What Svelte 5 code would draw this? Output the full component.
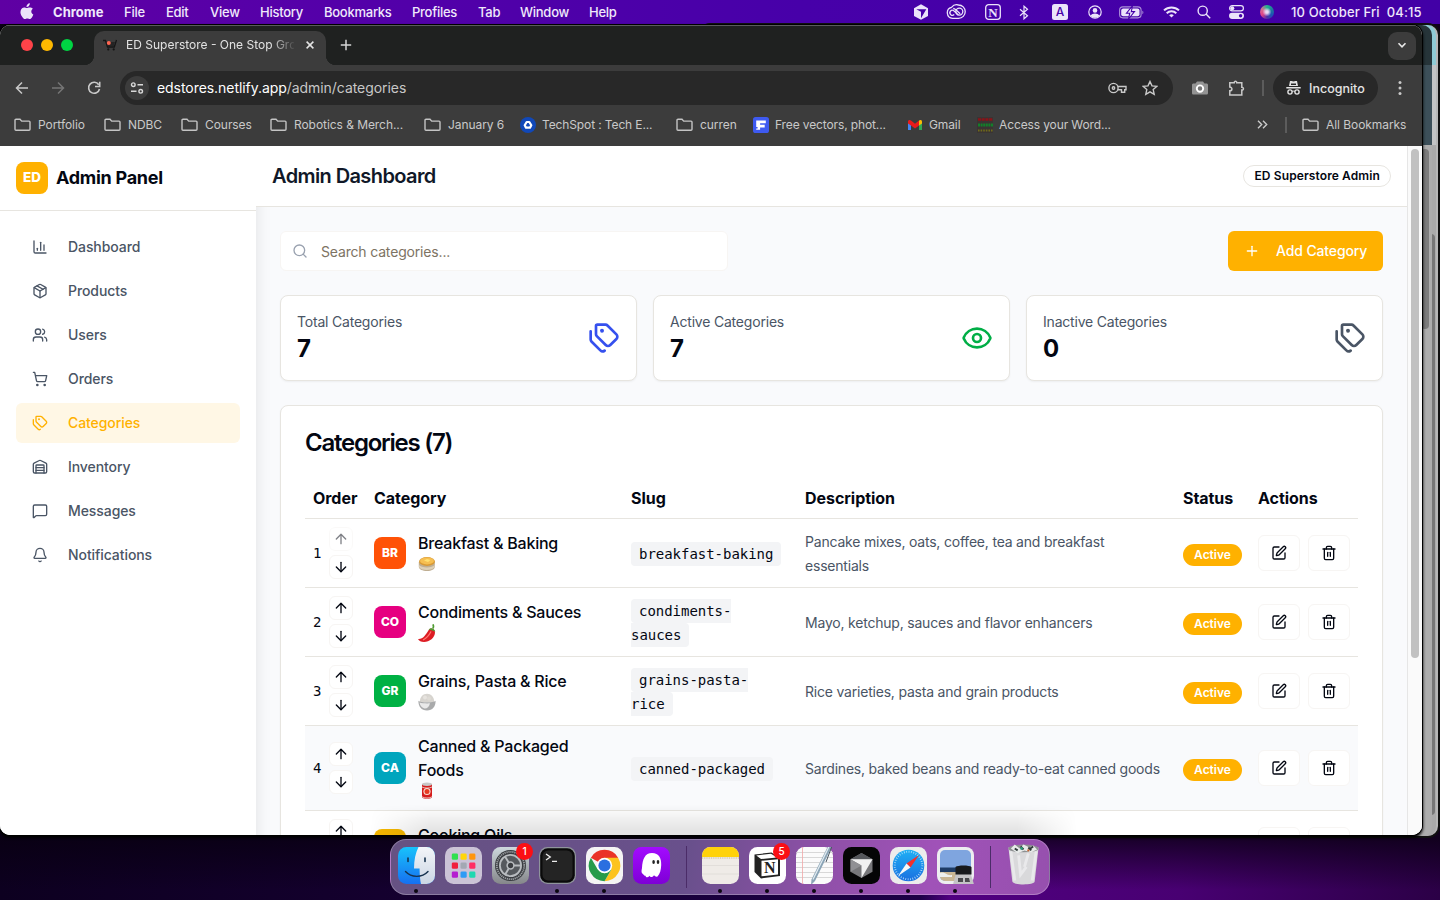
<script>
  const circle = (cx, cy, r) => `M${cx - r} ${cy}a${r} ${r} 0 1 0 ${2 * r} 0a${r} ${r} 0 1 0 ${-2 * r} 0`;

  const paths = {
    chart: ['M3 3v16a2 2 0 0 0 2 2h16', 'M18 17V9', 'M13 17V5', 'M8 17v-3'],
    box: ['M11 21.73a2 2 0 0 0 2 0l7-4A2 2 0 0 0 21 16V8a2 2 0 0 0-1-1.73l-7-4a2 2 0 0 0-2 0l-7 4A2 2 0 0 0 3 8v8a2 2 0 0 0 1 1.73z', 'M12 22V12', 'M3.29 7 12 12 20.71 7', 'm7.5 4.27 9 5.15'],
    users: ['M16 21v-2a4 4 0 0 0-4-4H6a4 4 0 0 0-4 4v2', 'M16 3.128a4 4 0 0 1 0 7.744', 'M22 21v-2a4 4 0 0 0-3-3.87', circle(9, 7, 4)],
    cart: [circle(8, 21, 1), circle(19, 21, 1), 'M2.05 2.05h2l2.66 12.42a2 2 0 0 0 2 1.58h9.78a2 2 0 0 0 1.95-1.57l1.65-7.43H5.12'],
    tags: ['M13.172 2a2 2 0 0 1 1.414.586l6.71 6.71a2.4 2.4 0 0 1 0 3.408l-4.592 4.592a2.4 2.4 0 0 1-3.408 0l-6.71-6.71A2 2 0 0 1 6 9.172V3a1 1 0 0 1 1-1z', 'M2 7v6.172a2 2 0 0 0 .586 1.414l6.71 6.71a2.4 2.4 0 0 0 3.191.193', circle(10.5, 6.5, 0.5)],
    warehouse: ['M18 21V10a1 1 0 0 0-1-1H7a1 1 0 0 0-1 1v11', 'M22 19a2 2 0 0 1-2 2H4a2 2 0 0 1-2-2V8a2 2 0 0 1 1.132-1.803l7.95-3.974a2 2 0 0 1 1.837 0l7.948 3.974A2 2 0 0 1 22 8z', 'M6 13h12', 'M6 17h12'],
    message: ['M22 17a2 2 0 0 1-2 2H6.828a2 2 0 0 0-1.414.586l-2.202 2.202A.71.71 0 0 1 2 21.286V5a2 2 0 0 1 2-2h16a2 2 0 0 1 2 2z'],
    bell: ['M10.268 21a2 2 0 0 0 3.464 0', 'M3.262 15.326A1 1 0 0 0 4 17h16a1 1 0 0 0 .74-1.673C19.41 13.956 18 12.499 18 8A6 6 0 0 0 6 8c0 4.499-1.411 5.956-2.738 7.326'],
    search: ['m21 21-4.34-4.34', circle(11, 11, 8)],
    plus: ['M5 12h14', 'M12 5v14'],
    up: ['m5 12 7-7 7 7', 'M12 19V5'],
    down: ['M12 5v14', 'm19 12-7 7-7-7'],
    eye: ['M2.062 12.348a1 1 0 0 1 0-.696 10.75 10.75 0 0 1 19.876 0 1 1 0 0 1 0 .696 10.75 10.75 0 0 1-19.876 0', circle(12, 12, 3)],
    edit: ['M12 3H5a2 2 0 0 0-2 2v14a2 2 0 0 0 2 2h14a2 2 0 0 0 2-2v-7', 'M18.375 2.625a1 1 0 0 1 3 3l-9.013 9.014a2 2 0 0 1-.853.505l-2.873.84a.5.5 0 0 1-.62-.62l.84-2.873a2 2 0 0 1 .506-.852z'],
    trash: ['M10 11v6', 'M14 11v6', 'M19 6v14a2 2 0 0 1-2 2H7a2 2 0 0 1-2-2V6', 'M3 6h18', 'M8 6V4a2 2 0 0 1 2-2h4a2 2 0 0 1 2 2v2']
  };

  const menus = ['Chrome', 'File', 'Edit', 'View', 'History', 'Bookmarks', 'Profiles', 'Tab', 'Window', 'Help'];

  const bookmarks = [
    ['folder', 'Portfolio'], ['folder', 'NDBC'], ['folder', 'Courses'], ['folder', 'Robotics & Merch...'],
    ['folder', 'January 6'], ['techspot', 'TechSpot : Tech E...'], ['folder', 'curren'],
    ['freepik', 'Free vectors, phot...'], ['gmail', 'Gmail'], ['word', 'Access your Word...']
  ];

  const nav = [
    ['chart', 'Dashboard'], ['box', 'Products'], ['users', 'Users'], ['cart', 'Orders'],
    ['tags', 'Categories'], ['warehouse', 'Inventory'], ['message', 'Messages'], ['bell', 'Notifications']
  ];

  const stats = [
    { label: 'Total Categories', value: 7, icon: 'tags', tone: 'blue' },
    { label: 'Active Categories', value: 7, icon: 'eye', tone: 'green' },
    { label: 'Inactive Categories', value: 0, icon: 'tags', tone: 'slate' }
  ];

  const rows = [
    { name: 'Breakfast & Baking', code: 'BR', color: '#ff5207', food: 'pancake', slug: 'breakfast-baking', text: 'Pancake mixes, oats, coffee, tea and breakfast essentials' },
    { name: 'Condiments & Sauces', code: 'CO', color: '#e60080', food: 'chili', slug: 'condiments-sauces', text: 'Mayo, ketchup, sauces and flavor enhancers' },
    { name: 'Grains, Pasta & Rice', code: 'GR', color: '#00b144', food: 'rice', slug: 'grains-pasta-rice', text: 'Rice varieties, pasta and grain products' },
    { name: 'Canned & Packaged Foods', code: 'CA', color: '#00a5bd', food: 'can', slug: 'canned-packaged', text: 'Sardines, baked beans and ready-to-eat canned goods' },
    { name: 'Cooking Oils', code: '', color: '#f5b800', food: '', slug: '', text: '' }
  ];

  const dockLeft = [['finder', true], ['launchpad', false], ['settings', false, '1'], ['terminal', true], ['chrome', true], ['phantom', false]];
  const dockRight = [['notes', true], ['notion', true, '5'], ['textedit', true], ['cursor', true], ['safari', true], ['preview', true]];
  const padColors = ['#2fe04f', '#ffd60a', '#ff9510', '#f0203c', '#a3a8b3', '#ff2d64', '#b51fd0', '#2e9bf5', '#1fd8b0'];
</script>

{#snippet icon(name, size = 16)}
  <svg class="line" width={size} height={size} viewBox="0 0 24 24">
    {#each paths[name] as d}<path {d} />{/each}
  </svg>
{/snippet}

{#snippet bookmarkIcon(kind)}
  <svg width="17" height="16" viewBox="0 0 17 16">
    {#if kind === 'folder'}
      <path d="M1 3.2c0-.6.4-1 1-1h4l1.700 1.900H15c.6 0 1 .4 1 1v7.200c0 .6-.4 1-1 1H2c-.6 0-1-.4-1-1z" fill="none" stroke="#c4c4c4" stroke-width="1.400" />
    {:else if kind === 'techspot'}
      <circle cx="8" cy="8" r="8" fill="#1148b8" />
      <path d="M6.700 5h2.600l2 3.300-1.300 2.300H6L4.700 8.300z" fill="none" stroke="#fff" stroke-width="2.200" stroke-linejoin="round" />
    {:else if kind === 'freepik'}
      <rect width="16" height="16" rx="2.600" fill="#3e5af0" />
      <path d="M3.200 3.400h9.600v2.900H7.100v1.500h4.600v2.700H7.100v2.300H3.200v-1.400h1.400v-1.300H3.200z" fill="#fff" />
    {:else if kind === 'gmail'}
      <path d="M1 4.400v8.700h3V7z" fill="#4285f4" /><path d="M15 4.400v8.700h-3V7z" fill="#34a853" />
      <path d="M12 3.600c1.300-1.200 3-.7 3 1.200v1.600L12 8.500z" fill="#fbbc04" />
      <path d="M1 6.400V4.800c0-2 1.900-2.300 3-1.200L8 6.700l4-3.100v4.900l-4 3-4-3z" fill="#ea1b1b" />
    {:else}
      <rect width="16" height="16" fill="#3a3433" />
      <path d="M1 2.500h15" stroke="#8c1218" stroke-width="2.500" stroke-dasharray="3 .7" />
      <path d="M1 8h15" stroke="#12802a" stroke-width="2.800" stroke-dasharray="2 .6" />
      <path d="M1 13.600h15" stroke="#6f6a1a" stroke-width="2" stroke-dasharray="1.600 1" />
    {/if}
  </svg>
{/snippet}

{#snippet food(kind)}
  <svg class="food" width="18" height="18" viewBox="0 0 18 18">
    {#if kind === 'pancake'}
      <path d="M.8 7v4.500C.8 14.500 4.500 16 9 16s7.800-1.700 7.800-4.500V7z" fill="#bfae92" />
      <path d="M1 10c2 3 13 3.500 15.700 0v2c-2 4-14 4-15.700 0z" fill="#ddd0b8" />
      <ellipse cx="9" cy="6.500" rx="8" ry="4.400" fill="#d99a35" /><ellipse cx="9" cy="5.900" rx="7" ry="3.500" fill="#f6bf52" />
      <path d="M6 5.500 9 4l3.500 1L10 7z" fill="#ffe070" />
    {:else if kind === 'chili'}
      <path d="M11 5.500C13 3.500 17 5 17 8.500c0 5-5.500 9.500-11 9.500-3 0-5-1.200-6-3 5 .5 7.500-4 11-9.500z" fill="#dd1d24" />
      <path d="M13 7.500c-2 4-5 7-8 8.500" stroke="#ff7470" stroke-width="1.300" fill="none" />
      <path d="M10.800 5.700c1.800-2.500 5.700-1.500 6.500 2.100-2-1.400-3.800-1.600-6.500-2.100z" fill="#4f9c33" /><path d="M14.800 4.500c.8-1 .9-2.500.1-4.200" stroke="#4f9c33" stroke-width="1.700" fill="none" />
    {:else if kind === 'rice'}
      <path d="M1.800 9C1.800 4 5 .8 9 .8S16.200 4 16.200 9z" fill="#d7d4cf" /><circle cx="7" cy="4.500" r="2" fill="#e6e3de" /><circle cx="11" cy="5.500" r="2" fill="#dedbd5" />
      <path d="M.4 7.800c2 2 15.200 2 17.200 0 0 6-3 9.700-8.600 9.700S.4 13.800.4 7.800z" fill="#a9aaab" />
      <path d="M1.500 9.500c3 1 8 1 10.500.8-1 4-3 5.400-5.500 5.200-3-1-4.500-3-5-6z" fill="#e9e9e9" />
    {:else if kind === 'can'}
      <path d="M4 2h10v13.500c-1.500 1.700-8.500 1.700-10 0z" fill="#d51c1c" />
      <ellipse cx="9" cy="2.200" rx="5" ry="1.700" fill="#c8c8c8" /><path d="M4 5c2 1.400 8 1.400 10 0M4 14.800c2 1.600 8 1.600 10 0" stroke="#e8c9c4" stroke-width=".9" fill="none" />
      <circle cx="9" cy="9.500" r="3.600" fill="#f7dcd0" /><circle cx="9" cy="9.500" r="2.500" fill="#e63a22" />
    {/if}
  </svg>
{/snippet}

{#snippet dockIcon(kind)}
  <svg width="37" height="37" viewBox="0 0 37 37">
    {#if kind === 'finder'}
      <rect width="37" height="37" rx="8.500" fill="url(#gFinder)" />
      <path d="M20.500 0H28.500a8.500 8.500 0 0 1 8.500 8.500v20a8.500 8.500 0 0 1-8.500 8.500H23c-.8-4-1.300-8-1.400-15.500H16C16 13 17.500 6 20.500 0z" fill="url(#gFace)" />
      <path d="M10 11v3.500M27 11v3.500" stroke="#16324e" stroke-width="1.600" stroke-linecap="round" />
      <path d="M7.500 24.500c6 6.500 16.500 6.500 22.500 0" fill="none" stroke="#16324e" stroke-width="1.400" stroke-linecap="round" />
    {:else if kind === 'launchpad'}
      <rect width="37" height="37" rx="8.500" fill="#cbc3d6" />
      {#each padColors as c, i}<rect x={6.8 + (i % 3) * 8.7} y={6.5 + Math.floor(i / 3) * 9} width="6.200" height="6.200" rx="1.300" fill={c} />{/each}
    {:else if kind === 'settings'}
      <rect width="37" height="37" rx="8.500" fill="url(#gGrey)" />
      <circle cx="18.500" cy="18.500" r="15.500" fill="#3b3e42" /><circle cx="18.500" cy="18.500" r="13.700" fill="none" stroke="#9da1a4" stroke-width="1.800" stroke-dasharray="1.200 .8" />
      <circle cx="18.500" cy="18.500" r="10.600" fill="#55595d" stroke="#b8bcbf" stroke-width="1.800" />
      <path d="M18.500 18.500 29 18.500M18.500 18.500 13 9.500M18.500 18.500 13 27.700" stroke="#b8bcbf" stroke-width="1.900" />
      <circle cx="18.500" cy="18.500" r="3.400" fill="#3b3e42" stroke="#b8bcbf" stroke-width="1.500" />
    {:else if kind === 'terminal'}
      <rect width="37" height="37" rx="8.500" fill="#8f949b" /><rect x="1.200" y="1.200" width="34.600" height="34.600" rx="7.600" fill="#0a0a0a" /><rect x="3.500" y="3.500" width="30" height="30" rx="5.600" fill="#242424" />
      <path d="m7 7 4.300 3L7 13M13 14.300h5" fill="none" stroke="#eee" stroke-width="1.300" />
    {:else if kind === 'chrome'}
      <rect width="37" height="37" rx="8.500" fill="#f4f4f4" />
      <path d="M18.500 18.500 4.900 10.650A15.700 15.700 0 0 1 32.100 10.650z" fill="#ea3327" />
      <path d="M18.500 10.650H32.100A15.700 15.700 0 0 1 18.500 34.200L25.300 22.400z" fill="#fcc31e" />
      <path d="M4.900 10.650 11.700 22.400 18.500 26.300 25.300 22.400 18.500 34.200A15.700 15.700 0 0 1 4.900 10.650z" fill="#259b4a" />
      <circle cx="18.500" cy="18.500" r="7.700" fill="#fff" /><circle cx="18.500" cy="18.500" r="6.100" fill="#2a6fe0" />
    {:else if kind === 'phantom'}
      <rect width="37" height="37" rx="8.500" fill="url(#gPhantom)" />
      <path d="M10 27c-2-1-1.500-3.500-1-6C9.500 12 12 6 19 6s9.500 5 9.200 12c-.2 5-1.200 9-3.700 11.500-1.500 1-2.500-.5-3.500-1.200-1.200 2.200-3.500 2.500-4.500.4-1.500 2-3.500 2-4 0-.7.100-1.700-.2-2.500-1.700z" fill="#fff" />
      <ellipse cx="20.600" cy="15" rx="1.300" ry="2" fill="#222" /><ellipse cx="25" cy="15" rx="1.300" ry="2" fill="#222" />
    {:else if kind === 'notes'}
      <rect width="37" height="37" rx="8.500" fill="#efebe7" /><path d="M0 10V8.500A8.500 8.500 0 0 1 8.500 0h20A8.500 8.500 0 0 1 37 8.500V10z" fill="#ffd20a" />
      <path d="M0 11h37" stroke="#b7a977" stroke-width=".8" stroke-dasharray="1 .8" /><path d="M0 18.500h37M0 27h37" stroke="#dedad7" stroke-width=".8" />
    {:else if kind === 'notion'}
      <rect width="37" height="37" rx="8.500" fill="#fff" />
      <path d="m5.500 7.500 17-2 8.500 5.500V29l-19 2.500-6.500-6.500z" fill="#222" /><path d="M7.300 8.500 22 6.800l6 3.600-16 1.600z" fill="#fff" /><path d="M12.500 13.800 29 12.300v15.200l-16.500 1.800z" fill="#fff" />
      <text x="20.800" y="26.300" class="serif" text-anchor="middle">N</text>
    {:else if kind === 'textedit'}
      <rect width="37" height="37" rx="8.500" fill="#fbfbfb" /><path d="M0 5.500h37M0 10.500h37M0 15.500h37M0 20.500h37M0 25.500h37M0 30.500h37" stroke="#cfcfcf" stroke-width=".8" />
      <path d="M6.500 0v37" stroke="#f3a7a7" stroke-width=".8" />
      <path d="m33-3 3 2-17 35-4 4 .5-5.500z" fill="#8aa4b6" /><path d="m34-2.500-17 35" stroke="#e4edf2" stroke-width="1.200" /><path d="m36-1-6 16" stroke="#47545e" stroke-width="1" />
    {:else if kind === 'cursor'}
      <rect width="37" height="37" rx="8.500" fill="#050505" />
      <path d="m18.500 6 11 6.300v12.500l-11 6.300-11-6.300V12.300z" fill="#77777a" /><path d="m7.500 12.300 11-6.300 11 6.300z" fill="#55575b" /><path d="M7.500 12.300h22l-11 18.800V18.500z" fill="#f1f1f1" /><path d="M7.500 12.300v12.500l11-6.300z" fill="#909094" />
    {:else if kind === 'safari'}
      <rect width="37" height="37" rx="8.500" fill="#ececec" /><circle cx="18.500" cy="18.500" r="15.800" fill="url(#gSafari)" />
      <circle cx="18.500" cy="18.500" r="13.800" fill="none" stroke="#bfe4fb" stroke-width="2" stroke-dasharray=".7 1.700" />
      <path d="M29 8 16.500 16.500l4 4z" fill="#f2302d" /><path d="m8 29 8.500-12.500 4 4z" fill="#f7f7f7" />
    {:else if kind === 'preview'}
      <rect width="37" height="37" rx="8" fill="#ededf0" /><rect x="3" y="3" width="31" height="31" rx="5" fill="#7fa5df" />
      <path d="M3 20.500h31V25H3z" fill="#1f3c66" /><path d="M3 25h31v4a5 5 0 0 1-5 5H8a5 5 0 0 1-5-5z" fill="#c9b694" /><path d="M3 26c5-2 6 3 12 2v2H3z" fill="#eef0ef" />
      <path d="M19 26h14.500l3.500 11.500H16z" fill="#c4c4c6" /><path d="M18.500 20c2-2 14-2 16 0v7.500h-16z" fill="#17191c" /><path d="M21 31h5v4h-5zM28 31h4l1 4h-5z" fill="#4a4a4e" />
    {/if}
  </svg>
{/snippet}

<svg class="defs" width="0" height="0">
  <defs>
    <linearGradient id="gFinder" x2="0" y2="1"><stop stop-color="#18c2fb" /><stop offset="1" stop-color="#1670f0" /></linearGradient>
    <linearGradient id="gFace" x2="0" y2="1"><stop stop-color="#f3f5f8" /><stop offset="1" stop-color="#cbd6e4" /></linearGradient>
    <linearGradient id="gGrey" x2="0" y2="1"><stop stop-color="#cdd8dd" /><stop offset="1" stop-color="#85878a" /></linearGradient>
    <linearGradient id="gPhantom" x2="0" y2="1"><stop stop-color="#a30bff" /><stop offset="1" stop-color="#7e00d6" /></linearGradient>
    <linearGradient id="gSafari" x2="0" y2="1"><stop stop-color="#1fb0f5" /><stop offset="1" stop-color="#1a6fe0" /></linearGradient>
  </defs>
</svg>

<div class="desktop">
  <header class="menubar">
    <svg class="apple" width="14" height="17" viewBox="0 0 14 17">
      <path d="M9.800.3c.1 1-.3 1.900-.9 2.600-.6.700-1.500 1.200-2.400 1.100-.1-1 .4-1.900.9-2.500C8 .8 9 .3 9.800.3zM12.900 5.800c-1 .7-1.600 1.600-1.600 2.800 0 1.400.8 2.500 2 3-.3 1-.8 1.900-1.400 2.800-.6.800-1.200 1.600-2.200 1.600-.9 0-1.300-.5-2.400-.5s-1.500.5-2.400.5c-1 0-1.700-.9-2.400-1.800C.6 11.900.1 9.500.7 7.400c.6-1.800 2-2.900 3.500-2.900 1 0 1.900.6 2.600.6.6 0 1.700-.7 2.900-.7 1.300 0 2.400.5 3.200 1.400z" />
    </svg>
    <nav class="menus">{#each menus as m, i}<span class:strong={i === 0}>{m}</span>{/each}</nav>
    <div class="tray">
      <svg width="16" height="16" viewBox="0 0 16 16"><path d="m8 .3 7 3.900v7.700l-7 3.900-7-3.900V4.200z" fill="#ebe3fa" /><path d="M3.300 5.200h10L8 14.300V7.800z" fill="#4700a8" /></svg>
      <svg width="20" height="16" viewBox="0 0 20 16" fill="none" stroke="#ebe3fa" stroke-width="1.300"><path d="M6.500 14.300a5.600 5.600 0 0 1-1-11A6.600 6.600 0 0 1 12.500 1a6.600 6.600 0 0 1 6.700 6.600 6.600 6.600 0 0 1-6.600 6.700z" /><path d="m12.400 11-4.600-4.300a2.500 2.500 0 1 0 .4 3.800M7.200 4.500a5 5 0 0 1 2.300 1l4.700 4.300" /><circle cx="13.300" cy="7.600" r="3.500" /></svg>
      <svg width="16" height="16" viewBox="0 0 16 16"><rect x=".7" y=".7" width="14.600" height="14.600" rx="3" fill="none" stroke="#ebe3fa" stroke-width="1.300" /><text x="8" y="12.500" class="serif tiny" text-anchor="middle">N</text></svg>
      <svg width="10" height="15" viewBox="0 0 10 15" fill="none" stroke="#ebe3fa" stroke-width="1.200"><path d="m1 4.300 7.500 6.400L5 13.800V1.200l3.500 3.100L1 10.700" /></svg>
      <span class="letter">A</span>
      <svg width="14" height="14" viewBox="0 0 14 14"><circle cx="7" cy="7" r="6.200" fill="none" stroke="#ebe3fa" stroke-width="1.200" /><circle cx="7" cy="5.400" r="2.300" fill="#ebe3fa" /><path d="M2.600 10.800c1.500-3 7.300-3 8.800 0-2 2.600-6.800 2.600-8.800 0z" fill="#ebe3fa" /></svg>
      <svg width="25" height="13" viewBox="0 0 25 13"><rect x=".6" y=".9" width="21.500" height="11" rx="3.300" fill="none" stroke="#ab90d8" stroke-width="1.100" /><rect x="2.200" y="2.500" width="18.300" height="7.800" rx="2" fill="#ebe3fa" /><path d="M13.500-.3 7.500 7.200h3.200L9.500 13l6-7.400h-3.200z" fill="#ebe3fa" stroke="#4500a8" stroke-width="1.100" /><path d="M23.400 4.700c1.300.3 1.300 3 0 3.500z" fill="#ab90d8" /></svg>
      <svg width="17" height="12" viewBox="0 0 17 12" fill="none" stroke="#ebe3fa" stroke-width="2"><path d="M1 4.400c4.200-4 10.800-4 15 0M3.700 7.200c2.700-2.600 6.900-2.600 9.600 0" /><path d="M8.500 11.500 6.200 9.200c1.300-1.200 3.300-1.200 4.600 0z" fill="#ebe3fa" stroke="none" /></svg>
      <svg width="14" height="14" viewBox="0 0 14 14" fill="none" stroke="#ebe3fa" stroke-width="1.400"><circle cx="5.700" cy="5.700" r="4.600" /><path d="m9 9 4.200 4.200" /></svg>
      <svg width="15" height="14" viewBox="0 0 15 14"><rect x=".6" y=".7" width="13.800" height="5.200" rx="2.600" fill="none" stroke="#ebe3fa" stroke-width="1.200" /><circle cx="3.300" cy="3.300" r="2" fill="#ebe3fa" /><rect y="7.700" width="15" height="6.200" rx="3.100" fill="#ebe3fa" /><circle cx="11.600" cy="10.800" r="1.700" fill="#4400a8" /></svg>
      <span class="siri"></span>
    </div>
    <span class="clock">10 October Fri&nbsp; 04:15</span>
  </header>

  <div class="back far"><i></i></div>
  <div class="back near"><i></i></div>

  <section class="window">
    <div class="tabstrip">
      <div class="lights"><i></i><i></i><i></i></div>
      <div class="tab">
        <svg width="16" height="12" viewBox="0 0 16 12"><path d="M1 1.500h2.500l2 6.500h6.800l2.200-7" fill="none" stroke="#151515" stroke-width="1.300" /><path d="M4 3h9l-1.200 4H5.500z" fill="#242424" /><circle cx="6.800" cy="3.900" r="2" fill="#ff6652" /><circle cx="6.300" cy="10.400" r="1.100" fill="#151515" /><circle cx="11.700" cy="10.400" r="1.100" fill="#151515" /></svg>
        <span class="tabtitle">ED Superstore - One Stop Grocery</span>
        <svg width="8" height="8" viewBox="0 0 8 8"><path d="m.6.6 6.800 6.800M7.400.6.6 7.400" stroke="#e4e4e4" stroke-width="1.500" /></svg>
      </div>
      <svg class="newtab" width="12" height="12" viewBox="0 0 12 12"><path d="M6 .8v10.400M.8 6h10.400" stroke="#d5d5d5" stroke-width="1.500" /></svg>
      <div class="tabmenu"><svg width="10" height="7" viewBox="0 0 10 7"><path d="m1.500 1.300 3.500 3.500 3.500-3.500" fill="none" stroke="#e8e8e8" stroke-width="1.600" /></svg></div>
    </div>

    <div class="toolbar">
      <svg width="14" height="14" viewBox="0 0 14 14" fill="none" stroke="#c9c9c9" stroke-width="1.500"><path d="M13 7H2M7 1.500 1.500 7 7 12.500" /></svg>
      <svg width="14" height="14" viewBox="0 0 14 14" fill="none" stroke="#757575" stroke-width="1.500"><path d="M1 7h11M7 1.500 12.500 7 7 12.500" /></svg>
      <svg width="14" height="14" viewBox="0 0 14 14" fill="none" stroke="#c9c9c9" stroke-width="1.600"><path d="M11.700 3.700A5.500 5.500 0 1 0 12.500 8M12.700.8v4.700H8" /></svg>
      <div class="omnibox">
        <span class="site"><svg width="14" height="12" viewBox="0 0 14 12" fill="none" stroke="#d9d9d9" stroke-width="1.400"><circle cx="3.300" cy="2.700" r="1.800" /><path d="M7.500 2.700H13M1 9.300h5.500" /><circle cx="10.700" cy="9.300" r="1.800" /></svg></span>
        <span class="url"><b>edstores.netlify.app</b>/admin/categories</span>
        <svg width="19" height="12" viewBox="0 0 19 12" fill="none" stroke="#c9c9c9" stroke-width="1.400"><circle cx="5.500" cy="6" r="4.600" /><circle cx="5.500" cy="6" r="1.200" /><path d="M9.800 4.500H18v3.300h-1.300v2.500h-3.200V7.800H9.800" /></svg>
        <svg width="16" height="16" viewBox="0 0 16 16" fill="none" stroke="#c9c9c9" stroke-width="1.400"><path d="m8 1.500 2 4.400 4.800.5-3.600 3.200 1 4.700L8 11.900l-4.200 2.400 1-4.700L1.200 6.400 6 5.900z" /></svg>
      </div>
      <div class="extensions">
        <svg width="16" height="14" viewBox="0 0 16 14"><path d="M1.500 2.500h2L5 .5h6l1.500 2h2c.8 0 1.500.5 1.500 1.500v8c0 1-.7 1.500-1.500 1.500h-13C.7 13.500 0 13 0 12V4c0-1 .7-1.500 1.500-1.500z" fill="#949494" /><circle cx="8" cy="7.600" r="3.200" fill="#777" stroke="#fff" stroke-width="1.900" /></svg>
        <svg width="17" height="17" viewBox="0 0 17 17" fill="none" stroke="#c9c9c9" stroke-width="1.500"><path d="M1.800 2.800h4.400c-.2-2 2.800-2 2.600 0H13.800v4.500c2.200-.2 2.200 3 0 2.800v4.900h-12v-4.200c2.800 0 2.800-3.700 0-3.700z" /></svg>
        <i class="bar"></i>
        <div class="incognito">
          <svg width="15" height="14" viewBox="0 0 15 14"><path d="M4 0h1.500l2 .6 2-.6H11l1 5H3z" fill="#e3e3e3" /><path d="M.3 6.700h14.400" stroke="#e3e3e3" stroke-width="1.500" /><path d="M5 3.300h5" stroke="#282828" stroke-width="1.600" /><circle cx="4" cy="11" r="2.100" fill="none" stroke="#e3e3e3" stroke-width="1.400" /><circle cx="11" cy="11" r="2.100" fill="none" stroke="#e3e3e3" stroke-width="1.400" /><path d="M6 10.500c1-.5 2-.5 3 0" stroke="#e3e3e3" fill="none" /></svg>
          Incognito
        </div>
        <svg width="4" height="16" viewBox="0 0 4 16" fill="#c9c9c9"><circle cx="2" cy="2.500" r="1.500" /><circle cx="2" cy="8" r="1.500" /><circle cx="2" cy="13.500" r="1.500" /></svg>
      </div>
    </div>

    <div class="bookmarks">
      {#each bookmarks as [kind, label]}<span class="bm" class:site-bm={kind !== 'folder'}>{@render bookmarkIcon(kind)}{label}</span>{/each}
      <svg class="chev" width="11" height="9" viewBox="0 0 11 9" fill="none" stroke="#c9c9c9" stroke-width="1.400"><path d="m1 .8 3.700 3.700L1 8.200M6 .8l3.700 3.700L6 8.200" /></svg>
      <i class="bar"></i>
      <span class="bm">{@render bookmarkIcon('folder')}All Bookmarks</span>
    </div>

    <div class="page">
      <aside class="sidebar">
        <div class="brand"><span class="logo">ED</span><span class="brandname">Admin Panel</span></div>
        <nav class="side">
          {#each nav as [glyph, label]}<span class="item" class:active={label === 'Categories'}>{@render icon(glyph)}<span class="lift">{label}</span></span>{/each}
        </nav>
      </aside>

      <div class="main">
        <div class="topbar"><h1>Admin Dashboard</h1><span class="who">ED Superstore Admin</span></div>
        <div class="content">
          <div class="actionsbar">
            <div class="searchbox">{@render icon('search')}<span>Search categories...</span></div>
            <div class="add">{@render icon('plus')}<span class="lift">Add Category</span></div>
          </div>
          <div class="stats">
            {#each stats as s}
              <div class="card stat">
                <div><p>{s.label}</p><strong>{s.value}</strong></div>
                <span class={s.tone}>{@render icon(s.icon, 32)}</span>
              </div>
            {/each}
          </div>
          <div class="card list">
            <h2>Categories (7)</h2>
            <div class="row head"><span>Order</span><span>Category</span><span>Slug</span><span>Description</span><span>Status</span><span>Actions</span></div>
            {#each rows as r, i}
              <div class="row" class:hover={i === 3}>
                {#if i < 4}
                  <div class="order">{i + 1}<div class="move"><span class="mini" class:off={i === 0}>{@render icon('up')}</span><span class="mini">{@render icon('down')}</span></div></div>
                {:else}
                  <div class="order last"><div class="move"><span class="mini">{@render icon('up')}</span><span class="mini"></span></div></div>
                {/if}
                <div class="cat"><span class="avatar" style:background={r.color}>{r.code}</span><div><p>{r.name}</p>{@render food(r.food)}</div></div>
                <div class="slug">{#if r.slug}<code>{r.slug}</code>{/if}</div>
                <div class="desc">{r.text}</div>
                <div>{#if i < 4}<span class="badge">Active</span>{/if}</div>
                <div class="tools"><span>{@render icon('edit')}</span><span>{@render icon('trash')}</span></div>
              </div>
            {/each}
          </div>
        </div>
      </div>
      <div class="scroll"><i></i></div>
    </div>
    <div class="dockshade"></div>
  </section>

  <div class="dock">
    {#each dockLeft as [kind, open, count]}<div class="app" class:open>{@render dockIcon(kind)}{#if count}<em>{count}</em>{/if}</div>{/each}
    <i class="divider"></i>
    {#each dockRight as [kind, open, count]}<div class="app" class:open>{@render dockIcon(kind)}{#if count}<em>{count}</em>{/if}</div>{/each}
    <i class="divider"></i>
    <div class="app">
      <svg width="33" height="43" viewBox="0 0 34 43">
        <path d="M1.500 4h31l-4 35c-.4 4-22.600 4-23 0z" fill="#d9d9db" /><path d="M4 8l4 30M30 8l-4 30M12 12l2 20 6-8M22 10l-4 14" stroke="#f3f3f5" stroke-width="3" fill="none" opacity=".6" />
        <ellipse cx="17" cy="5" rx="15.700" ry="4" fill="#8d9092" /><path d="m4 5 4-4 5 4 4-4 6 3 4-2 4 4-6 3-7-2-7 3z" fill="#e8ebea" /><path d="m8 5 3 2M14 3l3 3M22 4l3 3M27 3l-3 2" stroke="#303a3a" stroke-width="2" /><circle cx="15" cy="5" r="1.500" fill="#2e9b7c" /><circle cx="22" cy="7" r="1.200" fill="#c4622f" />
      </svg>
    </div>
  </div>
</div>

<style>
  :global(body) { background: #12001f; overflow: hidden; }
  * { box-sizing: border-box; }
  p, h1, h2 { margin: 0; }
  svg { display: block; flex: none; }
  .defs { position: absolute; }
  .line { fill: none; stroke: currentColor; stroke-width: 2; stroke-linecap: round; stroke-linejoin: round; }
  .desktop {
    position: relative; width: 1440px; height: 900px; overflow: hidden; font-family: Inter, "Liberation Sans", sans-serif;
    background: linear-gradient(rgba(8, 0, 16, .75) 838px, transparent 890px), linear-gradient(90deg, #0d0020 0, #14002e 380px, #1d0046 920px, #500080 950px, #480072 1180px, #2b0046 1440px);
    color: #030712;
  }
  .menubar { display: flex; align-items: center; height: 24px; padding-bottom: 1px; background: linear-gradient(90deg, #5f00a3 0, #5500a9 300px, #4700a9 800px, #4200a6 1440px); color: #efe8fb; font-size: 13px; font-weight: 500; }
  .apple { margin-left: 20px; fill: #ebe3fa; }
  .menus { display: grid; grid-template-columns: 71px 42px 44px 50px 64px 88px 66px 42px 69px 60px; margin-left: 19px; letter-spacing: -.02em; }
  .strong { font-weight: 700; letter-spacing: .002em; }
  .tray { display: grid; grid-template-columns: 32px 38px 36px 26px 46px 23px 50px 30px 36px 28px 34px; margin-left: 256px; padding-top: 1px; align-items: center; justify-items: center; }
  .letter { width: 16px; height: 16px; border-radius: 2.500px; background: #ebe3fa; color: #4700a8; font-size: 12px; line-height: 16px; text-align: center; }
  .siri { width: 14px; height: 14px; border-radius: 50%; background: radial-gradient(circle, #e8d9f5 0 12%, transparent 45%), conic-gradient(#1fb58e, #1e7c9b, #1c53b5, #5130a8, #e04287, #d66d92, #1fb58e); }
  .clock { margin-left: 7px; font-size: 13px; letter-spacing: .01em; white-space: nowrap; }
  .serif { font: 700 16px "Liberation Serif", serif; fill: #222; }
  .tiny { font-size: 13px; fill: #ebe3fa; }

  .back { position: absolute; border-radius: 10px; overflow: hidden; }
  .back i { position: absolute; width: 8px; border-radius: 4px; background: #777; }
  .far { left: 700px; top: 25px; width: 738px; height: 811px; background: linear-gradient(#8ecbd5 0 40px, #c3c4c5 40px 120px, #aaa 120px); border-right: 2px solid #b7b7b7; box-shadow: 0 0 0 2px #101010; }
  .far i { right: 1px; top: 209px; height: 581px; }
  .near { left: 600px; top: 25px; width: 832px; height: 811px; background: linear-gradient(#263439 0 40px, #3c4f59 40px 120px, #adadad 120px); }
  .near i { right: 3px; top: 124px; height: 180px; background: #7c7c7c; }
  .window { position: absolute; left: 0; top: 25px; width: 1422px; height: 810px; border-radius: 10px; overflow: hidden; background: #fff; box-shadow: 0 0 0 1px #000, 0 2px 3px 1px #000; }
  .tabstrip { display: flex; align-items: center; height: 40px; background: #1f2120; border-top: 1px solid #5a5b5b; }
  .lights { display: flex; gap: 8px; margin-top: -1px; padding-left: 21px; }
  .lights i { width: 12px; height: 12px; border-radius: 50%; background: #ff4349; }
  .lights i:nth-child(2) { background: #ffb900; }
  .lights i:nth-child(3) { background: #00d543; }
  .tab { position: relative; align-self: flex-end; display: flex; align-items: center; width: 232px; height: 34px; margin-left: 21px; padding: 0 11px 7px 8px; border-radius: 10px 10px 0 0; background: #3c3c3c; color: #e2e2e2; font-size: 12px; }
  .tab::before, .tab::after { content: ""; position: absolute; bottom: 0; width: 10px; height: 10px; }
  .tab::before { left: -10px; background: radial-gradient(circle at 0 0, #1f2120 10px, #3c3c3c 10.500px); }
  .tab::after { right: -10px; background: radial-gradient(circle at 100% 0, #1f2120 10px, #3c3c3c 10.500px); }
  .tabtitle { width: 168px; margin: 0 12px 0 8px; overflow: hidden; white-space: nowrap; letter-spacing: 0; mask: linear-gradient(90deg, #000 145px, transparent 170px); }
  .newtab { margin: -2px 0 0 14px; }
  .tabmenu { display: grid; place-items: center; width: 28px; height: 28px; margin: 0 6px 0 auto; border-radius: 9px; background: #3c3c3c; }
  .toolbar { display: flex; align-items: center; height: 46px; padding: 0 20px 0 15px; gap: 22px; background: #3c3c3c; }
  .omnibox { display: flex; align-items: center; width: 1054px; height: 34px; margin-left: -3px; padding: 0 15px 0 5px; gap: 15px; border-radius: 17px; background: #282828; }
  .site { display: grid; place-items: center; width: 24px; height: 24px; border-radius: 50%; background: #3c3c3c; }
  .url { flex: 1; margin: -2px 0 0 -7px; font-size: 14px; color: #c7c7c7; letter-spacing: -.055px; }
  .url b { font-weight: 400; color: #fff; }
  .extensions { display: flex; align-items: center; margin-left: -3px; }
  .extensions > svg + svg { margin-left: 20px; }
  .bar { width: 2px; height: 16px; background: #5c5c5c; }
  .extensions .bar { margin: 0 9px 0 17px; }
  .incognito { display: flex; align-items: center; gap: 8px; width: 105px; height: 34px; margin-right: 20px; padding-left: 13px; border-radius: 17px; background: #282828; color: #e3e3e3; font-size: 12.500px; font-weight: 500; }
  .bookmarks { display: grid; grid-template-columns: 90px 77px 89px 154px 96px 156px 77px 154px 70px 279px 29px 17px 110px; align-items: center; height: 35px; padding: 0 0 8px 14px; background: #3c3c3c; color: #c9c9c9; font-size: 12px; letter-spacing: -.06px; }
  .bm { display: flex; align-items: center; gap: 7px; white-space: nowrap; }
  .site-bm { gap: 5px; letter-spacing: -.12px; }
  .chev { margin-left: 1px; }

  .page { position: relative; display: grid; grid-template-columns: 256px 1151px 15px; height: 689px; overflow: hidden; background: #f9fafc; }
  .sidebar { position: relative; z-index: 1; height: 800px; background: #fff; box-shadow: 0 0 15px rgba(0, 0, 0, .1); clip-path: inset(0 -20px 0 0); }
  .brand { display: flex; align-items: center; gap: 8px; height: 65px; padding: 0 16px; border-bottom: 1px solid #e7e5e0; font-size: 18px; font-weight: 650; }
  .brandname { margin-top: -2px; letter-spacing: -.015em; }
  .logo { width: 32px; height: 32px; border-radius: 8px; background: #ffb100; color: #fff; font-size: 13.500px; font-weight: 800; line-height: 31px; text-align: center; }
  .side { display: grid; gap: 4px; padding: 16px; }
  .item { display: flex; align-items: center; gap: 20px; height: 40px; padding: 0 16px; border-radius: 6px; color: #4a5565; font-size: 14px; font-weight: 500; letter-spacing: -.08px; }
  .lift { margin-top: -2px; }
  .active { background: #fff7e5; color: #ffb100; }
  .topbar { position: relative; z-index: 2; display: flex; align-items: center; justify-content: space-between; height: 61px; padding: 0 16px; border-bottom: 1px solid #e7e5e0; background: #fff; }
  h1 { font-size: 20px; font-weight: 600; color: #101828; letter-spacing: -.03em; }
  .who { height: 22px; padding: 0 10px; border: 1px solid #e7e5e0; border-radius: 11px; font-size: 12px; font-weight: 600; line-height: 20px; letter-spacing: .11px; }
  .content { padding: 24px; }
  .actionsbar { display: flex; justify-content: space-between; margin-bottom: 24px; }
  .searchbox { display: flex; align-items: center; gap: 13px; width: 448px; height: 40px; padding: 0 11px; border: 1px solid #f7f5f3; border-radius: 6px; background: #fff; color: #7d7363; font-size: 14px; letter-spacing: -.17px; }
  .searchbox :global(svg) { color: #99a1af; }
  .add { display: flex; align-items: center; gap: 16px; width: 155px; height: 40px; padding-left: 16px; border-radius: 6px; background: #ffb100; color: #fff; font-size: 14px; font-weight: 500; letter-spacing: -.12px; white-space: nowrap; }
  .card { border: 1px solid #e7e5e0; border-radius: 8px; background: #fff; box-shadow: 0 1px 2px rgba(0, 0, 0, .05); }
  .stats { display: grid; grid-template-columns: repeat(3, 357px); gap: 16px; margin-bottom: 24px; }
  .stat { display: flex; align-items: center; justify-content: space-between; height: 86px; padding: 0 16px; }
  .stat p { font-size: 14px; line-height: 20px; color: #4a5565; letter-spacing: -.2px; }
  .stat strong { display: block; height: 32px; font-size: 24px; font-weight: 750; line-height: 34px; }
  .blue { color: #3550ee; }
  .green { color: #00ae46; }
  .slate { color: #4a5565; }
  .list { padding: 24px; }
  h2 { height: 48px; font-size: 24px; font-weight: 600; line-height: 26px; letter-spacing: -.052em; }
  .row { display: grid; grid-template-columns: 61px 257px 174px 378px 75px 108px; align-items: center; min-height: 69px; border-bottom: 1px solid #e7e5e0; }
  .row > * { padding: 8px; }
  .head { min-height: 41px; font-size: 16px; font-weight: 650; letter-spacing: -.003em; }
  .head > * { padding: 0 8px; }
  .hover { background: #f9fafc; }
  .order { display: flex; align-items: center; gap: 8px; font-family: "DejaVu Sans Mono", monospace; font-size: 14px; }
  .last { padding-left: 24px; }
  .move { display: grid; gap: 4px; }
  .mini { display: grid; place-items: center; width: 24px; height: 24px; border: 1px solid #f7f5f3; border-radius: 6px; background: #fff; }
  .off { opacity: .5; }
  .cat { display: flex; align-items: center; gap: 12px; padding-right: 30px; font-size: 16px; font-weight: 500; line-height: 24px; letter-spacing: -.22px; }
  .avatar { flex: none; width: 32px; height: 32px; border-radius: 8px; color: #fff; font-size: 12px; font-weight: 800; line-height: 32px; text-align: center; letter-spacing: 0; }
  .food { margin: 0 0 2px; }
  .slug { font-size: 16px; line-height: 24px; }
  code { padding: 4px 8px; border-radius: 4px; background: #f3f4f6; font: 14px/20px "DejaVu Sans Mono", monospace; letter-spacing: -.03px; }
  .desc { position: relative; top: 1px; font-size: 14px; line-height: 24px; color: #4a5565; letter-spacing: -.205px; }
  .badge { display: block; width: 59px; height: 22px; margin-top: 4px; border-radius: 11px; background: #ffb100; color: #fff; font-size: 12px; font-weight: 600; line-height: 22px; text-align: center; }
  .tools { display: flex; gap: 8px; }
  .tools span { display: grid; place-items: center; width: 42px; height: 36px; border: 1px solid #f7f5f3; border-radius: 6px; background: #fff; }
  .scroll { padding: 3px 3px 0; border-left: 1px solid #e6e6e6; background: #fafafa; }
  .scroll i { display: block; width: 8px; height: 509px; border-radius: 4px; background: #c1c1c1; }
  .dockshade { position: absolute; left: 370px; right: 345px; bottom: 0; height: 30px; background: linear-gradient(transparent, rgba(0, 0, 0, .1) 80%); mask: linear-gradient(90deg, transparent, #000 60px calc(100% - 60px), transparent); }

  .dock { position: absolute; left: 390px; top: 839px; display: flex; width: 660px; height: 56px; padding-left: 2px; border: 1px solid rgba(255, 255, 255, .25); border-radius: 16px; background: linear-gradient(100deg, #665282 0, #69508c 45%, #8f50a8 65%, #a052b8 82%, #9650ae 100%); }
  .app { position: relative; display: flex; justify-content: center; flex: none; width: 47px; padding-top: 7px; }
  .app:last-child { padding-top: 3px; width: 45px; }
  .open::after { content: ""; position: absolute; left: 21px; top: 49px; width: 4px; height: 4px; border-radius: 50%; background: #0b0710; }
  .app em { position: absolute; left: 29px; top: 3px; width: 17px; height: 17px; border-radius: 50%; background: #fb0f14; color: #fff; font: 500 10px/17px Inter, sans-serif; text-align: center; }
  .divider { width: 1px; height: 42px; margin: 6px 10px 0 11px; background: #4b2c68; flex: none; }
</style>
